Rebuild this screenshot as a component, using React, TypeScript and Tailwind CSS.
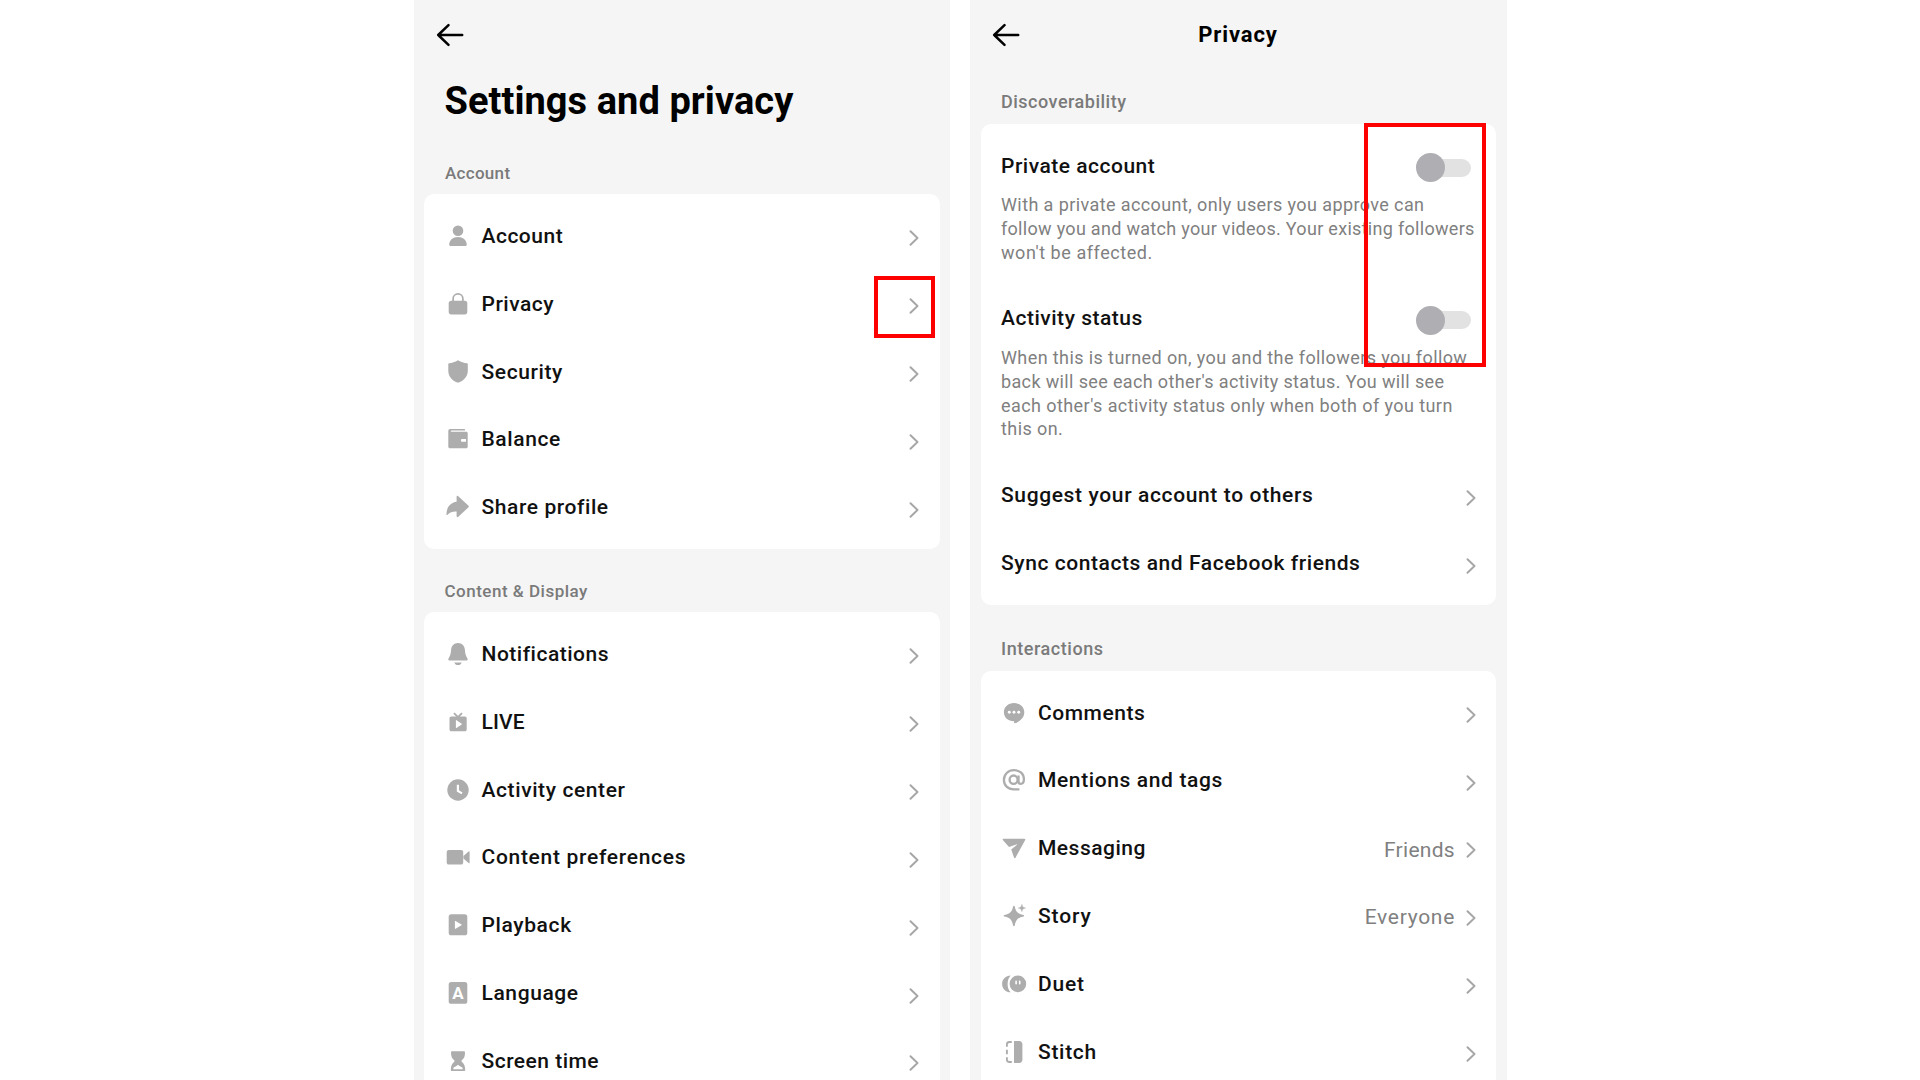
import type { ReactNode } from "react";

type Row = { label: string; tracking: number; icon?: ReactNode; value?: string; valueTracking?: number };
type Line = { text: string; tracking: number };

function Icon({ children }: { children: ReactNode }) {
  return (
    <svg viewBox="0 0 24 24" className="mr-3 size-6 shrink-0 overflow-visible fill-[#adadad]">
      {children}
    </svg>
  );
}

const accountRows: Row[] = [
  {
    label: "Account",
    tracking: 0.5,
    icon: (
      <Icon>
        <circle cx="12" cy="6.8" r="5.3" />
        <path d="M3.2 20.6C3.4 16.2 7 13.1 12 13.1s8.600 3.100 8.800 7.500c0 .9-.6 1.500-1.500 1.500H4.700c-.9 0-1.500-.6-1.500-1.500z" />
      </Icon>
    ),
  },
  {
    label: "Privacy",
    tracking: 0.5,
    icon: (
      <Icon>
        <rect x="2.7" y="8.7" width="18.6" height="13.7" rx="2.6" />
        <path d="M7.100 10V6.800a4.900 4.900 0 0 1 9.800 0V10" fill="none" stroke="#adadad" strokeWidth="1.7" />
      </Icon>
    ),
  },
  {
    label: "Security",
    tracking: 0.6,
    icon: (
      <Icon>
        <path d="M12 .2c3 1.800 6 2.700 9 3 .5.100.8.4.8.9v6.600c0 5.800-4 9.700-9.100 11.800-.5.200-.9.200-1.400 0C6.200 20.400 2.300 16.500 2.300 10.700V4.100c0-.5.3-.8.8-.9 3-.3 5.900-1.200 8.900-3z" />
      </Icon>
    ),
  },
  {
    label: "Balance",
    tracking: 0.6,
    icon: (
      <Icon>
        <path
          fillRule="evenodd"
          d="M4.300 2h14c.5 0 .8.3.8.800v.6H5.600c-.6 0-.9.300-.9.650s.3.650.9.650H20.200c1 0 1.500.6 1.500 1.500v13.600c0 .9-.6 1.500-1.500 1.500H3.800c-.9 0-1.500-.6-1.500-1.500V4c0-1.200.8-2 2-2zM15.800 11.900c-.5 0-.8.3-.8.8v1.200c0 .5.300.8.8.8h4.200v-2.800z"
        />
      </Icon>
    ),
  },
  {
    label: "Share profile",
    tracking: 0.58,
    icon: (
      <Icon>
        <path d="M10.600 1.700c0-.8.8-1.100 1.400-.6l10.500 9.600c.5.500.5 1.100 0 1.600L12 21.900c-.6.500-1.400.2-1.400-.6v-4.700c-4-.2-6.700.6-9 3.100-.6.6-1.300.3-1.200-.5C.8 11.900 4.300 7.600 10.600 6.700z" />
      </Icon>
    ),
  },
];

const displayRows: Row[] = [
  {
    label: "Notifications",
    tracking: 0.5,
    icon: (
      <Icon>
        <path d="M12 1.100c3.900 0 6.600 2.800 6.900 6.700.2 3.700.8 5.800 2.700 9 .4.8 0 1.600-.9 1.600H3.300c-.9 0-1.300-.8-.9-1.600 1.900-3.200 2.500-5.300 2.700-9C5.400 3.900 8.100 1.100 12 1.100zM8.300 20.400h7.400c-.5 1.600-1.900 2.600-3.700 2.600s-3.200-1-3.700-2.600z" />
      </Icon>
    ),
  },
  {
    label: "LIVE",
    tracking: 0.1,
    icon: (
      <Icon>
        <path d="M8 3.200l4 4 4-4" fill="none" stroke="#adadad" strokeWidth="1.8" />
        <path
          fillRule="evenodd"
          d="M5.400 6.600h13.400c1.100 0 1.900.7 1.900 1.800v11c0 1.100-.8 1.800-1.900 1.800H5.400c-1.100 0-1.900-.7-1.900-1.800v-11c0-1.100.8-1.800 1.900-1.800zM9.900 10.500v7.200c0 .3.300.5.600.3l5.200-3.600c.3-.2.300-.4 0-.6l-5.200-3.600c-.3-.2-.6 0-.6.300z"
        />
      </Icon>
    ),
  },
  {
    label: "Activity center",
    tracking: 0.6,
    icon: (
      <Icon>
        <circle cx="12" cy="12" r="10.700" />
        <path d="M11.900 6.800v6.100l4.100 2.500" fill="none" stroke="#fff" strokeWidth="2.200" />
      </Icon>
    ),
  },
  {
    label: "Content preferences",
    tracking: 0.7,
    icon: (
      <Icon>
        <rect x="0.700" y="4.900" width="16.500" height="14.700" rx="2.200" />
        <path d="M17.400 11.100l5.200-4.700c.5-.4 1-.2 1 .4v10.900c0 .6-.5.8-1 .4l-5.200-4.700z" />
      </Icon>
    ),
  },
  {
    label: "Playback",
    tracking: 0.62,
    icon: (
      <Icon>
        <rect x="2.700" y="1.300" width="18.600" height="21" rx="2.600" />
        <path d="M8.900 8.300v7.200c0 .4.300.5.600.3l6-3.500c.3-.2.300-.5 0-.7l-6-3.500c-.3-.2-.6-.1-.6.200z" fill="#fff" />
      </Icon>
    ),
  },
  {
    label: "Language",
    tracking: 0.6,
    icon: (
      <Icon>
        <rect x="2.700" y="1" width="18.600" height="21.800" rx="2.600" />
        <text x="12" y="18" textAnchor="middle" fill="#fff" className="text-[17px] font-bold">
          A
        </text>
      </Icon>
    ),
  },
  {
    label: "Screen time",
    tracking: 0.48,
    icon: (
      <Icon>
        <path
          fillRule="evenodd"
          d="M6.200 2.200h11.600c.7 0 1.200.5 1.200 1.200 0 4-1 6-3 7.500-.7.600-.7 1.500 0 2.100 2.200 1.700 3.200 4.300 3.200 7.900 0 .7-.5 1.200-1.200 1.200H6c-.7 0-1.200-.5-1.200-1.200 0-3.600 1-6.200 3.200-7.900.7-.6.7-1.500 0-2.100-2-1.500-3-3.500-3-7.500 0-.7.5-1.200 1.200-1.200zM7.200 20.200h9.600c-.1-1.200-.5-1.900-1.300-2.300-1.100-.5-2.100-1-2.900-1.700-.4-.3-.8-.3-1.200 0-.8.7-1.800 1.200-2.900 1.700-.8.400-1.200 1.100-1.300 2.300z"
        />
      </Icon>
    ),
  },
];

const discoverRows: Row[] = [
  { label: "Suggest your account to others", tracking: 0.63 },
  { label: "Sync contacts and Facebook friends", tracking: 0.57 },
];

const interactionRows: Row[] = [
  {
    label: "Comments",
    tracking: 0.55,
    icon: (
      <Icon>
        <path d="M12 2.100c5.900 0 10.300 4 10.300 9.200 0 5-3.600 8.600-8.700 10.800-.8.300-1.500-.1-1.500-.9v-.9C6 20.300 1.900 16.500 1.900 11.300S6.200 2.100 12 2.100z" />
        <g fill="#fff">
          <circle cx="7.300" cy="11.200" r="1.450" />
          <circle cx="12" cy="11.200" r="1.450" />
          <circle cx="16.700" cy="11.200" r="1.450" />
        </g>
      </Icon>
    ),
  },
  {
    label: "Mentions and tags",
    tracking: 0.62,
    icon: (
      <Icon>
        <g fill="none" stroke="#adadad" strokeWidth="2.300">
          <path d="M17.400 21.300h-5.600C5.900 21.300 1.900 17.400 1.900 11.900S6.100 2.200 12 2.200s9.900 3.700 9.900 8.900c0 2.900-1.200 4.800-3.100 4.800-1.500 0-2.300-1-2.300-2.700V7.400" />
          <ellipse cx="11.600" cy="11.700" rx="4" ry="4.200" />
        </g>
      </Icon>
    ),
  },
  {
    label: "Messaging",
    tracking: 0.5,
    value: "Friends",
    valueTracking: 0.3,
    icon: (
      <Icon>
        <path d="M1.500 2.700h21c.7 0 1 .6.700 1.200l-9.700 17.800c-.4.800-1.200.7-1.500-.1L9.200 13.400l5.500-4.300c.5-.4.200-.9-.4-.7L7 10.900.8 3.900c-.4-.6-.1-1.200.7-1.200z" />
      </Icon>
    ),
  },
  {
    label: "Story",
    tracking: 0.9,
    value: "Everyone",
    valueTracking: 0.7,
    icon: (
      <Icon>
        <path d="M11.100 2.400c.2-1 1.400-1 1.600 0 1.100 5 2.400 6.900 8.700 8.500 1 .3 1 1.300 0 1.600-6.300 1.600-7.600 3.500-8.700 8.900-.2 1-1.400 1-1.600 0-1.100-5.400-2.400-7.300-8.700-8.900-1-.3-1-1.300 0-1.600 6.300-1.600 7.600-3.500 8.700-8.500z" />
        <path d="M19.900.4c.6 2.500 1 3 3.600 3.600-2.600.6-3 1.100-3.600 3.600-.6-2.500-1-3-3.600-3.600 2.600-.6 3-1.100 3.600-3.600z" stroke="#adadad" strokeWidth=".5" />
      </Icon>
    ),
  },
  {
    label: "Duet",
    tracking: 0.8,
    icon: (
      <Icon>
        <circle cx="15.900" cy="11.900" r="8.300" />
        <path d="M8.700 3.500C3.800 3.500.1 7.200.1 11.900s3.700 8.400 8.600 8.400C6.600 18.200 5.600 15.400 5.600 11.900s1-6.300 3.100-8.400z" />
        <path d="M14.100 9.400v2.300M17.700 9.400v2.300" stroke="#fff" strokeWidth="1.600" strokeLinecap="round" />
      </Icon>
    ),
  },
  {
    label: "Stitch",
    tracking: 0.7,
    icon: (
      <Icon>
        <path d="M12 1h5.200c1.900 0 3.200 1.300 3.200 3.200v15.600c0 1.900-1.300 3.200-3.200 3.200H12z" />
        <path d="M9.800 2H7.400C5.800 2 4.900 2.900 4.900 4.500v2.200M4.900 9.700v4.600M4.900 17.300v2.200c0 1.600.9 2.500 2.500 2.500h2.400" fill="none" stroke="#adadad" strokeWidth="1.900" />
      </Icon>
    ),
  },
];

const privateAccountLines: Line[] = [
  { text: "With a private account, only users you approve can", tracking: 0.4 },
  { text: "follow you and watch your videos. Your existing followers", tracking: 0.3 },
  { text: "won't be affected.", tracking: 0.55 },
];

const activityStatusLines: Line[] = [
  { text: "When this is turned on, you and the followers you follow", tracking: 0.4 },
  { text: "back will see each other's activity status. You will see", tracking: 0.36 },
  { text: "each other's activity status only when both of you turn", tracking: 0.42 },
  { text: "this on.", tracking: 0.42 },
];

function Chevron({ raised = false }: { raised?: boolean }) {
  return (
    <svg
      viewBox="0 0 10 16"
      className={`h-4 w-2.5 shrink-0 fill-none stroke-[#a6a6a6] ${raised ? "mt-[3px]" : "mt-[5px]"}`}
    >
      <path d="M1.500 1.200L8.500 8l-7 6.800" strokeWidth="1.900" strokeLinecap="round" strokeLinejoin="round" />
    </svg>
  );
}

function BackArrow() {
  return (
    <svg viewBox="0 0 28 24" className="h-6 w-7 fill-none stroke-black">
      <path d="M12.500 2.200L2.200 12l10.300 9.800M2.200 12h24" strokeWidth="2.500" strokeLinecap="round" strokeLinejoin="round" />
    </svg>
  );
}

function Label({ text, tracking }: { text: string; tracking: number }) {
  return (
    <span
      className="mt-[1.500px] flex-1 whitespace-nowrap text-[21px] font-medium text-[#111111]"
      style={{ letterSpacing: `${tracking}px` }}
    >
      {text}
    </span>
  );
}

function Rows({ rows }: { rows: Row[] }) {
  return (
    <>
      {rows.map((r) => (
        <div key={r.label} className="flex h-[67.83px] items-center">
          {r.icon}
          <Label text={r.label} tracking={r.tracking} />
          {r.value && (
            <span className="mr-[11px] mt-1 text-[21px] text-[#808080]" style={{ letterSpacing: `${r.valueTracking}px` }}>
              {r.value}
            </span>
          )}
          <Chevron raised={!!r.value} />
        </div>
      ))}
    </>
  );
}

function ToggleRow({ label, tracking, lines }: { label: string; tracking: number; lines: Line[] }) {
  return (
    <div>
      <div className="flex h-[55px] items-center">
        <Label text={label} tracking={tracking} />
        <div className="mr-[5px] mt-1 flex h-[18px] w-[53px] items-center rounded-full bg-[#e2e2e2]">
          <div className="-ml-0.5 size-[29px] shrink-0 rounded-full bg-[#afaeb3]" />
        </div>
      </div>
      <p className="whitespace-nowrap text-[18px] leading-[23.9px] text-[#808080]">
        {lines.map((l) => (
          <span key={l.text} className="block" style={{ letterSpacing: `${l.tracking}px` }}>
            {l.text}
          </span>
        ))}
      </p>
    </div>
  );
}

export default function App() {
  return (
    <div className="flex h-[1080px] w-[1920px] overflow-hidden bg-white pl-[414px] font-['Roboto',sans-serif]">
      <section className="h-full w-[536px] bg-[#f5f5f5] px-2.5">
        <header className="flex h-[70px] items-center pl-3">
          <BackArrow />
        </header>
        <h1 className="mt-[9px] h-11 whitespace-nowrap pl-[20.500px] text-[38px] font-bold leading-[44px] tracking-[0.06px] text-black">
          Settings and privacy
        </h1>
        <h2 className="mb-[9px] mt-[38px] h-6 pl-[21px] text-[17px] font-medium leading-6 tracking-[0.3px] text-[#7a7a7a]">Account</h2>
        <div className="relative h-[355px] rounded-[10px] bg-white py-2 pl-[21.500px] pr-[21px]">
          <Rows rows={accountRows} />
          <div className="absolute right-[5px] top-[82px] h-[62px] w-[61px] border-4 border-[#ff0000]" />
        </div>
        <h2 className="mb-[9px] mt-[30px] h-6 pl-[20.500px] text-[17px] font-medium leading-6 tracking-[0.5px] text-[#7a7a7a]">
          Content &amp; Display
        </h2>
        <div className="h-[500px] rounded-[10px] bg-white py-2 pl-[21.500px] pr-[21px]">
          <Rows rows={displayRows} />
        </div>
      </section>

      <section className="ml-5 h-full w-[537px] bg-[#f5f5f5] px-[11px]">
        <header className="grid h-[70px] grid-cols-[28px_1fr_28px] items-center pl-[11px] pr-3">
          <BackArrow />
          <h1 className="-mt-px text-center text-[22px] font-bold tracking-[0.9px] text-black">Privacy</h1>
        </header>
        <h2 className="mb-2.5 mt-5 h-6 pl-5 text-[18px] font-medium leading-6 tracking-[0.5px] text-[#7a7a7a]">Discoverability</h2>
        <div className="relative h-[481px] rounded-[10px] bg-white pl-5 pr-5 pt-3.5">
          <ToggleRow label="Private account" tracking={0.5} lines={privateAccountLines} />
          <div className="mb-5 mt-[26px]">
            <ToggleRow label="Activity status" tracking={0.52} lines={activityStatusLines} />
          </div>
          <Rows rows={discoverRows} />
          <div className="absolute -top-[1.500px] right-[10px] h-[244px] w-[122px] border-4 border-[#ff0000]" />
        </div>
        <h2 className="mb-[9.700px] mt-8 h-6 pl-5 text-[18px] font-medium leading-6 tracking-[0.55px] text-[#7a7a7a]">Interactions</h2>
        <div className="h-[440px] rounded-[10px] bg-white py-2 pl-[21px] pr-5">
          <Rows rows={interactionRows} />
        </div>
      </section>
    </div>
  );
}
